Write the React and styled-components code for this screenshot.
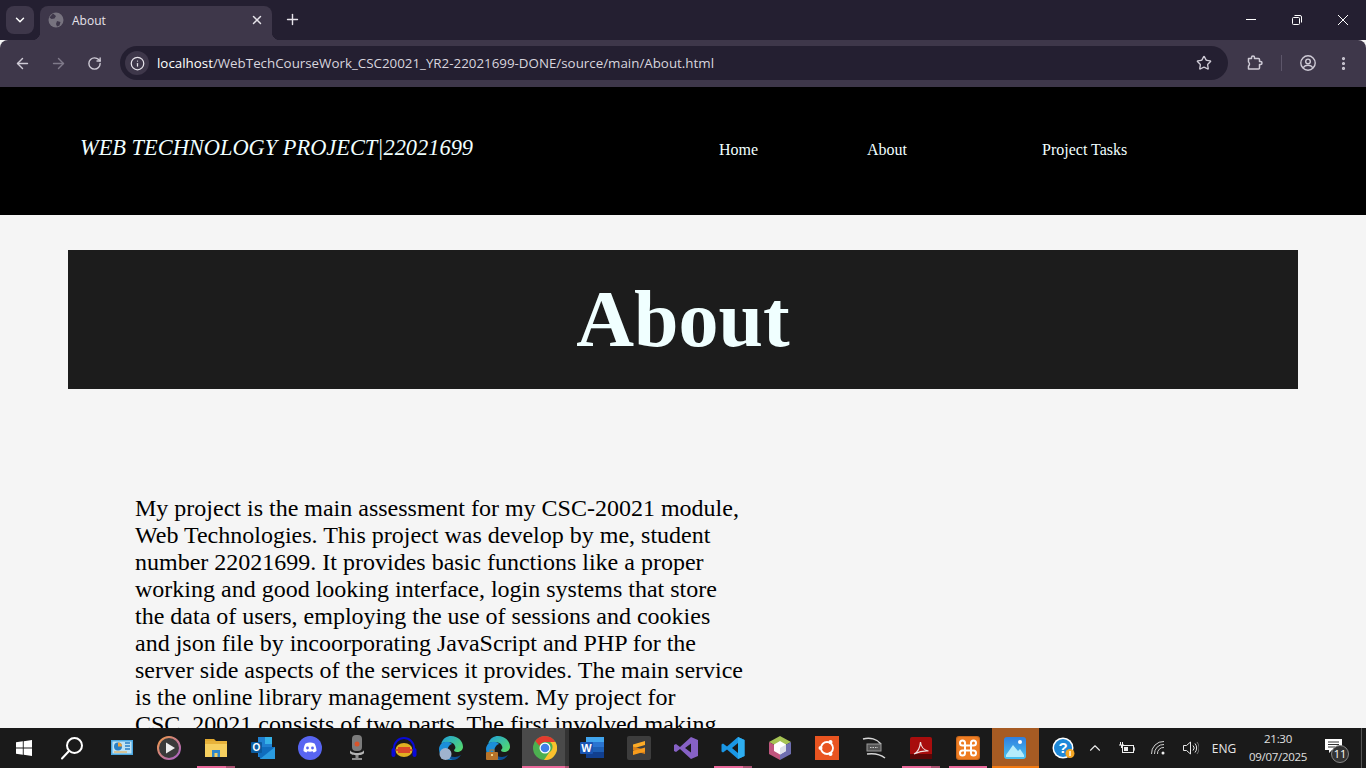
import styled, { createGlobalStyle } from "styled-components";
import {
  ArrowLeft,
  ArrowRight,
  ChevronDown,
  ChevronUp,
  EllipsisVertical,
  Info,
  Plus,
  RotateCw,
  Star,
  X,
} from "lucide-react";

const GlobalStyle = createGlobalStyle`
  html, body {
    margin: 0;
    height: 100%;
    overflow: hidden;
  }
  body {
    font-family: "Liberation Serif", "Times New Roman", serif;
    background: #f5f5f5;
  }
`;

const Screen = styled.div`
  height: 100vh;
  display: flex;
  flex-direction: column;
  overflow: hidden;
`;

/* browser chrome */
const TabStrip = styled.div`
  height: 40px;
  flex: none;
  background: #241f31;
  display: flex;
  align-items: flex-end;
  padding-left: 6px;
  font-family: "Open Sans", "Noto Sans", sans-serif;
`;

const TabSearch = styled.div`
  width: 28px;
  height: 28px;
  margin-bottom: 6px;
  border-radius: 8px;
  background: #3e374a;
  color: #fff;
  display: flex;
  align-items: center;
  justify-content: center;
`;

const Tab = styled.div`
  position: relative;
  width: 232px;
  height: 34px;
  margin-left: 6px;
  padding: 0 8px 6px;
  box-sizing: border-box;
  border-radius: 8px 8px 0 0;
  background: #3e374a;
  color: #e6e3ea;
  font-size: 12px;
  display: flex;
  align-items: center;
  &::before,
  &::after {
    content: "";
    position: absolute;
    bottom: 0;
    width: 8px;
    height: 8px;
  }
  &::before {
    left: -8px;
    background: radial-gradient(circle at 0 0, transparent 8px, #3e374a 8.5px);
  }
  &::after {
    right: -8px;
    background: radial-gradient(circle at 100% 0, transparent 8px, #3e374a 8.5px);
  }
`;

const TabTitle = styled.span`
  margin-left: 8px;
  flex: 1;
`;

const NewTab = styled.div`
  width: 28px;
  height: 28px;
  margin: 0 0 7px 6px;
  color: #e6e3ea;
  display: flex;
  align-items: center;
  justify-content: center;
`;

const WindowControls = styled.div`
  margin-left: auto;
  align-self: stretch;
  display: flex;
  color: #fff;
`;

const WindowButton = styled.div`
  width: 46px;
  display: flex;
  align-items: center;
  justify-content: center;
`;

const Toolbar = styled.div`
  height: 47px;
  flex: none;
  box-sizing: border-box;
  padding-bottom: 1px;
  background: #3e374a;
  border-radius: 8px 8px 0 0;
  display: flex;
  align-items: center;
  color: #cfcbd6;
  font-family: "Open Sans", "Noto Sans", sans-serif;
`;

const NavButton = styled.div`
  width: 36px;
  flex: none;
  display: flex;
  justify-content: center;
  color: ${(p) => (p.$dim ? "#7f7a8a" : "#cfcbd6")};
  &:first-child {
    margin-left: 4px;
  }
`;

const Omnibox = styled.div`
  width: 1108px;
  height: 34px;
  margin-left: 8px;
  flex: none;
  padding: 0 6px 0 5px;
  box-sizing: border-box;
  border-radius: 17px;
  background: #241f31;
  display: flex;
  align-items: center;
`;

const SiteInfo = styled.div`
  width: 24px;
  height: 24px;
  border-radius: 50%;
  background: #3e374a;
  color: #e6e3ea;
  display: flex;
  align-items: center;
  justify-content: center;
`;

const Url = styled.div`
  margin-left: 8px;
  flex: 1;
  font-size: 13.35px;
  color: #d8d5de;
  white-space: nowrap;
  b {
    font-weight: 400;
    color: #fff;
  }
`;

const ToolIcon = styled.div`
  width: ${(p) => p.$w}px;
  margin-left: ${(p) => p.$ml || 0}px;
  flex: none;
  display: flex;
  justify-content: center;
`;

const ToolDivider = styled.div`
  width: 1px;
  height: 16px;
  background: #5d566a;
  margin: 0 13px 0 8px;
`;

/* the page itself */
const Page = styled.div`
  flex: 1;
  min-height: 0;
  overflow: hidden;
  background: #f5f5f5;
`;

const Header = styled.header`
  height: 128px;
  background: #000;
  display: grid;
  grid-template-columns: 719px 148px 175px auto;
  align-items: center;
`;

const Brand = styled.div`
  padding: 0 0 7px 80px;
  font-size: 22.4px;
  font-style: italic;
  color: #f0ffff;
  white-space: nowrap;
`;

const NavLink = styled.a`
  padding-bottom: 2px;
  font-size: 16px;
  color: #f0ffff;
`;

const Main = styled.main`
  padding: 35px 68px 0;
`;

const Banner = styled.div`
  height: 139px;
  background: #1c1c1c;
  display: flex;
  align-items: center;
  justify-content: center;
`;

const BannerTitle = styled.h1`
  margin: 0;
  font-size: 80px;
  font-weight: 700;
  color: #f0ffff;
`;

const Body = styled.p`
  width: 612px;
  margin: 106px 0 0 67px;
  font-size: 24px;
  line-height: 27px;
  color: #000;
`;

/* windows taskbar */
const Taskbar = styled.div`
  height: 40px;
  flex: none;
  background: #1a1a1a;
  display: flex;
  color: #fff;
  font-family: "Open Sans", "Noto Sans", sans-serif;
`;

const SystemButton = styled.div`
  width: 48px;
  flex: none;
  display: flex;
  align-items: center;
  justify-content: center;
`;

const AppList = styled.div`
  display: flex;
  margin-left: 2.5px;
`;

const appBackground = (p) => {
  if (p.$state === "focus") return "#a65b23";
  if (p.$state === "active") {
    return "linear-gradient(to right, #4a4a4a calc(100% - 4px), #333 calc(100% - 4px))";
  }
  return "transparent";
};

const appUnderline = (p) => {
  if (p.$state === "focus") return "#f27a12";
  if (!p.$stack) return "#e9689a";
  const seg = p.$state === "active" ? 4 : 9;
  return `linear-gradient(to right, #e9689a calc(100% - ${seg}px), #a8506f calc(100% - ${seg}px))`;
};

const AppButton = styled.div`
  position: relative;
  width: 47px;
  flex: none;
  display: flex;
  align-items: center;
  justify-content: center;
  background: ${appBackground};
  &::after {
    content: "";
    display: ${(p) => (p.$state ? "block" : "none")};
    position: absolute;
    left: ${(p) => (p.$state === "open" ? 4.5 : 0)}px;
    right: ${(p) => (p.$state === "open" ? 4.5 : 0)}px;
    bottom: 0;
    height: 2px;
    background: ${appUnderline};
  }
`;

const Tray = styled.div`
  position: relative;
  margin-left: auto;
  display: flex;
  padding-right: 15px;
`;

const TrayItem = styled.div`
  position: relative;
  width: ${(p) => p.$w || 32}px;
  display: flex;
  align-items: center;
  justify-content: center;
  font-size: 12px;
  color: #e8e8e8;
`;

const Clock = styled.div`
  font-size: 11.5px;
  letter-spacing: -0.3px;
  line-height: 18px;
  text-align: center;
  color: #e0e0e0;
`;

const CountBadge = styled.span`
  position: absolute;
  right: 2px;
  bottom: 5px;
  width: 18px;
  height: 18px;
  box-sizing: border-box;
  border: 1px solid #888;
  border-radius: 50%;
  background: #333;
  font-size: 11px;
  line-height: 16px;
  text-align: center;
  color: #fff;
`;

const ShowDesktop = styled.div`
  position: absolute;
  right: 4px;
  bottom: 0;
  width: 1px;
  height: 40px;
  background: #555;
`;

/* drawings */
const GlobeIcon = () => (
  <svg width="16" height="16" viewBox="0 0 16 16">
    <circle cx="8" cy="8" r="7.5" fill="#77737f" />
    <path d="M5 1.5 8 4 6.5 6.5 3.5 7 1.5 5.5ZM9 9l3.5 1-1 3.5L9 14.5 8 12Z" fill="#3e374a" />
  </svg>
);

const RestoreIcon = () => (
  <svg width="10" height="10" viewBox="0 0 10 10" fill="none" stroke="#fff" strokeWidth="1">
    <rect x="0.5" y="2.5" width="7" height="7" rx="1" />
    <path d="M2.5 .5h5.5a1.5 1.5 0 0 1 1.5 1.5v5.5" />
  </svg>
);

const MinimizeIcon = () => (
  <svg width="10" height="10" viewBox="0 0 10 10">
    <rect y="4" width="10" height="1" fill="#fff" />
  </svg>
);

const CloseIcon = () => (
  <svg width="10" height="10" viewBox="0 0 10 10" stroke="#fff" strokeWidth="1">
    <path d="M0 0 10 10M10 0 0 10" />
  </svg>
);

const PuzzleIcon = () => (
  <svg width="16" height="16" viewBox="0 0 16 16" fill="none" stroke="#cfcbd6" strokeWidth="1.5">
    <path
      d="M1.5 3.500h3V2.500a1.500 1.500 0 0 1 3 0v1h4a1 1 0 0 1 1 1v2h1a1.400 1.400 0 0 1 0 3h-1v3.500a1 1 0 0 1-1 1h-10V11a2.500 2.500 0 0 0 0-4Z"
      strokeLinejoin="round"
    />
  </svg>
);

const ProfileIcon = () => (
  <svg width="16" height="16" viewBox="0 0 16 16" fill="none" stroke="#cfcbd6" strokeWidth="1.4">
    <circle cx="8" cy="8" r="7.2" />
    <circle cx="8" cy="6.4" r="2.300" />
    <path d="M3.300 12.800c1-2 3-2.600 4.700-2.600s3.700.6 4.700 2.600" />
  </svg>
);

const WindowsLogo = () => (
  <svg width="16" height="16" viewBox="0 0 16 16" fill="#fff">
    <path d="M0 2.300 6.800 1.300V7.500H0ZM7.700 1.200 16 0V7.500H7.700ZM0 8.500H6.800V14.700L0 13.700ZM7.700 8.500H16V16L7.700 14.800Z" />
  </svg>
);

const SearchIcon = () => (
  <svg width="24" height="24" viewBox="0 0 24 24" fill="none" stroke="#fff" strokeWidth="2">
    <circle cx="14.500" cy="9.500" r="7.500" />
    <path d="M9 15 2 22.500" strokeLinecap="round" />
  </svg>
);

const ControlPanel = () => (
  <svg width="22" height="16" viewBox="0 0 22 16">
    <rect width="22" height="15" fill="#4aa7e0" />
    <rect x="1.500" y="1.500" width="19" height="12" fill="#bfe3f6" />
    <circle cx="7" cy="6.500" r="4" fill="#2a7fc4" />
    <path d="M7 6.500V2.500A4 4 0 0 1 11 6.500Z" fill="#f1a33b" />
    <path d="M14 3h5M14 6h5M14 9h5" stroke="#2a7fc4" strokeWidth="1.500" />
    <path d="M3 12h13" stroke="#e8a33b" strokeWidth="1" />
  </svg>
);

const PlayerIcon = () => (
  <svg width="24" height="24" viewBox="0 0 24 24">
    <defs>
      <linearGradient id="playerRing" x1="0" y1="0" x2="1" y2="1">
        <stop offset="0" stopColor="#f09a4a" />
        <stop offset="1" stopColor="#a35fc8" />
      </linearGradient>
    </defs>
    <circle cx="12" cy="12" r="11" fill="#3a3a3a" stroke="url(#playerRing)" strokeWidth="2" />
    <path d="M9 6.500 18 12 9 17.500Z" fill="#eee" />
  </svg>
);

const FolderIcon = () => (
  <svg width="22" height="20" viewBox="0 0 22 20">
    <path d="M0 1h9l2 2h-11Z" fill="#e2a92e" />
    <rect y="3" width="22" height="16" fill="#f6cf5f" />
    <rect y="3" width="22" height="3" fill="#e7b23b" />
    <path d="M7 19v-7h8v7h-2.500v-4h-3v4Z" fill="#2f87c9" />
  </svg>
);

const OutlookIcon = () => (
  <svg width="24" height="24" viewBox="0 0 24 24">
    <rect x="7" y="1" width="14" height="20" fill="#1f7fd0" />
    <rect x="14" y="1" width="7" height="7" fill="#35b2e8" />
    <path d="M7 11h17v12H9Z" fill="#0f6cbd" />
    <path d="M9 23 24 11v12Z" fill="#2a9be0" />
    <rect x="0" y="6" width="11" height="11" rx="1" fill="#0b5a9e" />
    <text x="5.500" y="15" fontSize="10" fontWeight="700" fill="#fff" textAnchor="middle" fontFamily="Liberation Sans">O</text>
  </svg>
);

const DiscordIcon = () => (
  <svg width="24" height="24" viewBox="0 0 24 24">
    <circle cx="12" cy="12" r="12" fill="#5865f2" />
    <path d="M7.500 7.500c3-1.300 6-1.300 9 0 1.200 2 2 4.500 2 7.500-1 .9-2 1.300-3 1.600l-.8-1.300c-1.800.5-3.600.5-5.400 0l-.8 1.300c-1-.3-2-.7-3-1.600 0-3 .8-5.500 2-7.500Z" fill="#fff" />
    <circle cx="9.500" cy="12" r="1.400" fill="#5865f2" />
    <circle cx="14.500" cy="12" r="1.400" fill="#5865f2" />
  </svg>
);

const RecorderIcon = () => (
  <svg width="14" height="26" viewBox="0 0 14 26">
    <rect x="2" y="0" width="10" height="16" rx="4" fill="#7c7c7c" />
    <circle cx="7" cy="9" r="2.500" fill="#d9532a" />
    <path d="M0 15c1 4 13 4 14 0v3c-1 3-13 3-14 0Z" fill="#b5b5b5" />
    <rect x="5.500" y="20" width="3" height="3" fill="#8d8d8d" />
    <rect x="2" y="23" width="10" height="2" fill="#8d8d8d" />
  </svg>
);

const AudacityIcon = () => (
  <svg width="26" height="22" viewBox="0 0 26 22">
    <path d="M3 14V11a10 10 0 0 1 20 0v3" fill="none" stroke="#0a0ad8" strokeWidth="2" />
    <rect x="0.500" y="11" width="4" height="9" rx="2" fill="#0a0ad8" />
    <rect x="21.500" y="11" width="4" height="9" rx="2" fill="#0a0ad8" />
    <ellipse cx="13" cy="13" rx="8.500" ry="7" fill="#e0b021" />
    <path d="M5 13h16M7 11h12M7 15h12" stroke="#d8262c" strokeWidth="1.500" />
  </svg>
);

const EdgeIcon = ({ variant }) => (
  <svg width="24" height="24" viewBox="0 0 24 24">
    <defs>
      <linearGradient id={`edge${variant}`} x1="0" y1="0" x2="1" y2="0.800">
        <stop offset="0" stopColor="#1e9fe0" />
        <stop offset="1" stopColor="#54d96c" />
      </linearGradient>
    </defs>
    <path d="M2 8C4 2 8 0 12 0c7 0 12 5 12 11 0 3-3 5-6 5-2 0-3-1-3-2 1-1 2-2 1-4-1-3-4-4-7-4-4 0-6.500 1-7 2Z" fill={`url(#edge${variant})`} />
    <path d="M2 8c3-3 9-3 11 0-3 1-5 4-4.500 8 .5 3 3 6 7 7.500-1.300.4-3 .5-3.500.5C5 24 0 19 0 13c0-2 1-4 2-5Z" fill="#1b8ed8" />
    <path d="M22 19c-2 3-5 5-8 5-4-1-6-4-6-7 1 2 4 4 8 4 2 0 4-1 6-2Z" fill="#0c4f96" />
    {variant === "globe" ? (
      <circle cx="6.500" cy="18" r="6" fill="#9fb3cd" />
    ) : (
      <g>
        <rect x="0" y="16" width="12" height="8" rx="1" fill="#b8742a" />
        <rect x="4" y="14" width="4" height="3" fill="none" stroke="#b8742a" />
        <rect x="5" y="18" width="2" height="2" fill="#f2d58a" />
      </g>
    )}
  </svg>
);

const ChromeIcon = () => (
  <svg width="24" height="24" viewBox="0 0 24 24">
    <circle cx="12" cy="12" r="12" fill="#4caf50" />
    <path d="M12 0a12 12 0 0 1 10.400 6H12a6 6 0 0 0-5.600 3.800L2.300 5A12 12 0 0 1 12 0Z" fill="#e33b2e" />
    <path d="M22.400 6A12 12 0 0 1 11 24l5.300-7.800A6 6 0 0 0 17 6Z" fill="#fbc02d" />
    <circle cx="12" cy="12" r="5.500" fill="#fff" />
    <circle cx="12" cy="12" r="4.300" fill="#3f7fe8" />
  </svg>
);

const WordIcon = () => (
  <svg width="24" height="22" viewBox="0 0 24 22">
    <rect x="6" y="0" width="18" height="21" rx="1" fill="#2a74d0" />
    <rect x="6" y="0" width="18" height="5" fill="#41a5ee" />
    <rect x="6" y="10" width="18" height="5" fill="#1d5fb5" />
    <rect x="6" y="15" width="18" height="6" fill="#113f8f" />
    <rect x="0" y="5" width="13" height="12" rx="1" fill="#1a55b3" />
    <text x="6.500" y="15" fontSize="11" fontWeight="700" fill="#fff" textAnchor="middle" fontFamily="Liberation Sans">W</text>
  </svg>
);

const SublimeIcon = () => (
  <svg width="24" height="24" viewBox="0 0 24 24">
    <rect width="24" height="24" rx="2" fill="#3d3d3d" />
    <path d="M6 8.500 18 5V9L6 12.500Z" fill="#fcab27" />
    <path d="M6 10.500 18 14V18L6 14.500Z" fill="#d8801a" />
    <path d="M6 15 18 11.500V15.500L6 19Z" fill="#f89c1c" />
  </svg>
);

const VisualStudioIcon = () => (
  <svg width="24" height="24" viewBox="0 0 24 24">
    <path d="M17 1 24 4V20L17 23 6 13 2 16 0 15V9L2 8 6 11ZM17 7.500 11 12 17 16.500Z" fill="#8661c5" fillRule="evenodd" />
  </svg>
);

const VsCodeIcon = () => (
  <svg width="24" height="24" viewBox="0 0 24 24">
    <path d="M17 1 23.500 4V20L17 23 6 13.500 2 16.500 .5 15.500V8.500L2 7.500 6 10.500ZM17 7 11 12 17 17Z" fill="#1a97e6" fillRule="evenodd" />
    <path d="M17 1 23.500 4V20L17 23Z" fill="#2eaef0" />
  </svg>
);

const NetbeansIcon = () => (
  <svg width="22" height="24" viewBox="0 0 22 24">
    <path d="M11 0 22 6 11 12 0 6Z" fill="#a6c454" />
    <path d="M0 6 11 12V24L0 18Z" fill="#c0567e" />
    <path d="M22 6 11 12V24L22 18Z" fill="#6e6eb0" />
    <path d="M11 5 17 8.500V15L11 18.500 5 15V8.500Z" fill="#fff" />
    <path d="M11 12 17 8.500V15L11 18.500Z" fill="#dde0ea" />
  </svg>
);

const UbuntuIcon = () => (
  <svg width="24" height="24" viewBox="0 0 24 24">
    <rect width="24" height="24" fill="#e95420" />
    <circle cx="12" cy="12" r="6" fill="none" stroke="#fff" strokeWidth="1.800" />
    <circle cx="5.500" cy="12" r="2" fill="#fff" />
    <circle cx="15.500" cy="6" r="2" fill="#fff" />
    <circle cx="15.500" cy="18" r="2" fill="#fff" />
  </svg>
);

const BashIcon = () => (
  <svg width="24" height="22" viewBox="0 0 24 22" fill="none">
    <path d="M1 2c7-2 14 0 18 5M5 17c7-1 13 0 18 4" stroke="#d8d8d8" strokeWidth="1.500" />
    <rect x="5" y="7" width="14" height="7" fill="#555" stroke="#999" />
    <path d="M8 10.500h8" stroke="#ccc" strokeDasharray="1.500 1" />
  </svg>
);

const AcrobatIcon = () => (
  <svg width="22" height="22" viewBox="0 0 22 22">
    <rect width="22" height="22" rx="2" fill="#a80d0d" />
    <rect y="17" width="22" height="5" fill="#5c0606" />
    <path d="M4 17c4-2 6-6 6.500-12 .2 4 3 8 8 9-4-.3-9 .5-14.500 3Z" fill="none" stroke="#f0e0e0" strokeWidth="1.200" />
  </svg>
);

const XamppIcon = () => (
  <svg width="24" height="24" viewBox="0 0 24 24">
    <rect width="24" height="24" rx="3" fill="#c9681c" />
    <rect x="1" y="1" width="22" height="22" rx="3" fill="#ee7c22" />
    <path
      d="M9 9V7a2.500 2.500 0 1 0-2.500 2.500H17.500A2.500 2.500 0 1 0 15 7V17a2.500 2.500 0 1 0 2.500-2.500H6.500A2.500 2.500 0 1 0 9 17Z"
      fill="none"
      stroke="#fff"
      strokeWidth="2"
    />
  </svg>
);

const PhotosIcon = () => (
  <svg width="22" height="22" viewBox="0 0 22 22">
    <defs>
      <linearGradient id="photosBg" x1="0" y1="0" x2="0" y2="1">
        <stop offset="0" stopColor="#2f7fe0" />
        <stop offset="1" stopColor="#4cc3ee" />
      </linearGradient>
    </defs>
    <rect width="22" height="22" rx="3" fill="url(#photosBg)" />
    <circle cx="16" cy="5" r="2" fill="#fff" />
    <path d="M2 18 9 8l5 6 2-2 4 6v2H2Z" fill="#b5ecfb" />
  </svg>
);

const HelpIcon = () => (
  <svg width="24" height="24" viewBox="0 0 24 24">
    <circle cx="12" cy="12" r="10.500" fill="#fff" />
    <circle cx="12" cy="12" r="9" fill="#1e88d8" />
    <text x="12" y="17" fontSize="15" fontWeight="700" fill="#fff" textAnchor="middle" fontFamily="Liberation Sans">?</text>
    <circle cx="19" cy="17.500" r="4.500" fill="#f5a623" />
    <rect x="18.300" y="15" width="1.400" height="5" fill="#fff" />
  </svg>
);

const BatteryIcon = () => (
  <svg width="16" height="12" viewBox="0 0 16 12" fill="none" stroke="#eee">
    <rect x="3.500" y="3.500" width="11" height="7" />
    <rect x="5" y="5" width="4" height="4" fill="#eee" stroke="none" />
    <path d="M15 6h1v2h-1M0 3h5M1.500 0v3M3.500 0v3M2.500 3v3" />
  </svg>
);

const WifiIcon = () => (
  <svg width="16" height="14" viewBox="0 0 16 14" fill="none" stroke="#cfcfcf">
    <path d="M.5 13A12 12 0 0 1 13 .5M3.500 13A9 9 0 0 1 13 3.500M6.500 13A6 6 0 0 1 13 6.500" />
    <circle cx="12" cy="12" r="1.500" fill="#eee" stroke="none" />
  </svg>
);

const VolumeIcon = () => (
  <svg width="16" height="14" viewBox="0 0 16 14" fill="none" stroke="#e8e8e8">
    <path d="M.5 4.500h3L7.500 1v12l-4-3.500h-3Z" />
    <path d="M10 4.500a3.500 3.500 0 0 1 0 5M12 2.500a7 7 0 0 1 0 9" />
    <path d="M14 1a9.500 9.500 0 0 1 0 12" stroke="#777" />
  </svg>
);

const NotificationIcon = () => (
  <svg width="17" height="18" viewBox="0 0 17 18">
    <path d="M0 0H17V11H7L4 14V11H0Z" fill="#fff" />
    <path d="M3 3H14M3 5.500H14M3 8H10" stroke="#333" />
  </svg>
);

const apps = [
  { icon: <ControlPanel /> },
  { icon: <PlayerIcon /> },
  { icon: <FolderIcon />, state: "open", stack: true },
  { icon: <OutlookIcon /> },
  { icon: <DiscordIcon /> },
  { icon: <RecorderIcon /> },
  { icon: <AudacityIcon /> },
  { icon: <EdgeIcon variant="globe" /> },
  { icon: <EdgeIcon variant="work" /> },
  { icon: <ChromeIcon />, state: "active", stack: true },
  { icon: <WordIcon /> },
  { icon: <SublimeIcon /> },
  { icon: <VisualStudioIcon /> },
  { icon: <VsCodeIcon />, state: "open", stack: true },
  { icon: <NetbeansIcon /> },
  { icon: <UbuntuIcon /> },
  { icon: <BashIcon /> },
  { icon: <AcrobatIcon />, state: "open", stack: true },
  { icon: <XamppIcon />, state: "open" },
  { icon: <PhotosIcon />, state: "focus" },
];

export default function App() {
  return (
    <Screen>
      <GlobalStyle />
      <TabStrip>
        <TabSearch>
          <ChevronDown size={14} strokeWidth={2.5} />
        </TabSearch>
        <Tab>
          <GlobeIcon />
          <TabTitle>About</TabTitle>
          <X size={14} strokeWidth={2.5} />
        </Tab>
        <NewTab>
          <Plus size={17} strokeWidth={2} />
        </NewTab>
        <WindowControls>
          <WindowButton>
            <MinimizeIcon />
          </WindowButton>
          <WindowButton>
            <RestoreIcon />
          </WindowButton>
          <WindowButton>
            <CloseIcon />
          </WindowButton>
        </WindowControls>
      </TabStrip>
      <Toolbar>
        <NavButton>
          <ArrowLeft size={17} />
        </NavButton>
        <NavButton $dim>
          <ArrowRight size={17} />
        </NavButton>
        <NavButton>
          <RotateCw size={15} strokeWidth={2.2} />
        </NavButton>
        <Omnibox>
          <SiteInfo>
            <Info size={15} />
          </SiteInfo>
          <Url>
            <b>localhost</b>/WebTechCourseWork_CSC20021_YR2-22021699-DONE/source/main/About.html
          </Url>
          <ToolIcon $w={36}>
            <Star size={16} strokeWidth={2} />
          </ToolIcon>
        </Omnibox>
        <ToolIcon $w={36} $ml={9}>
          <PuzzleIcon />
        </ToolIcon>
        <ToolDivider />
        <ToolIcon $w={26}>
          <ProfileIcon />
        </ToolIcon>
        <ToolIcon $w={44}>
          <EllipsisVertical size={17} strokeWidth={2.5} />
        </ToolIcon>
      </Toolbar>
      <Page>
        <Header>
          <Brand>WEB TECHNOLOGY PROJECT|22021699</Brand>
          <NavLink>Home</NavLink>
          <NavLink>About</NavLink>
          <NavLink>Project Tasks</NavLink>
        </Header>
        <Main>
          <Banner>
            <BannerTitle>About</BannerTitle>
          </Banner>
          <Body>
            My project is the main assessment for my CSC-20021 module, Web Technologies. This
            project was develop by me, student number 22021699. It provides basic functions like a
            proper working and good looking interface, login systems that store the data of users,
            employing the use of sessions and cookies and json file by incoorporating JavaScript
            and PHP for the server side aspects of the services it provides. The main service is
            the online library management system. My project for CSC_20021 consists of two parts.
            The first involved making
          </Body>
        </Main>
      </Page>
      <Taskbar>
        <SystemButton>
          <WindowsLogo />
        </SystemButton>
        <SystemButton>
          <SearchIcon />
        </SystemButton>
        <AppList>
          {apps.map((app, i) => (
            <AppButton key={i} $state={app.state} $stack={app.stack}>
              {app.icon}
            </AppButton>
          ))}
        </AppList>
        <Tray>
          <TrayItem>
            <HelpIcon />
          </TrayItem>
          <TrayItem>
            <ChevronUp size={18} color="#e8e8e8" strokeWidth={1.5} />
          </TrayItem>
          <TrayItem>
            <BatteryIcon />
          </TrayItem>
          <TrayItem>
            <WifiIcon />
          </TrayItem>
          <TrayItem>
            <VolumeIcon />
          </TrayItem>
          <TrayItem $w={34}>ENG</TrayItem>
          <TrayItem $w={74}>
            <Clock>
              21:30
              <br />
              09/07/2025
            </Clock>
          </TrayItem>
          <TrayItem $w={36}>
            <NotificationIcon />
            <CountBadge>11</CountBadge>
          </TrayItem>
          <ShowDesktop />
        </Tray>
      </Taskbar>
    </Screen>
  );
}
